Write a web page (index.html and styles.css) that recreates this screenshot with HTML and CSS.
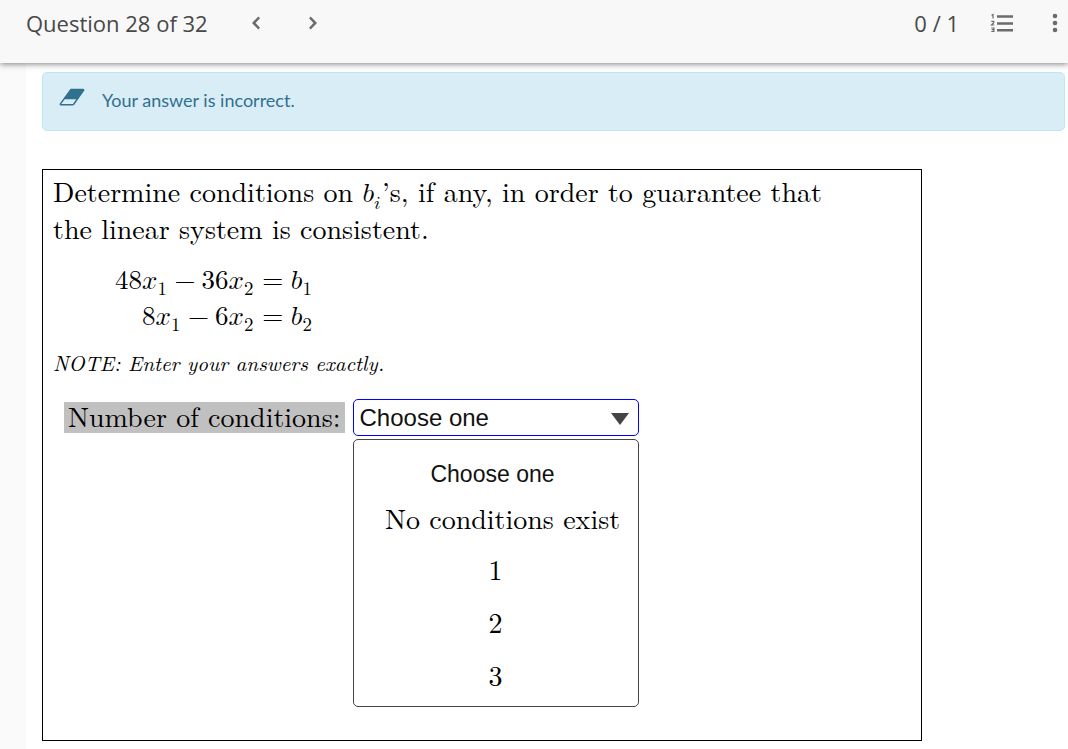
FILE: index.html
```html
<!DOCTYPE html>
<html lang="en">
<head>
  <meta charset="UTF-8">
  <meta name="viewport" content="width=device-width, initial-scale=1.0">
  <title>Question 28 of 32</title>
  <link rel="stylesheet" href="styles.css">
</head>
<body>
  <!-- Top bar -->
  <header class="top-bar">
    <h1 class="question-title">Question 28 of 32</h1>
    <nav class="pager">
      <button type="button" class="icon-button" aria-label="Previous question">
        <svg width="24" height="24" viewBox="0 0 24 24"><path d="M16 7.300 14.300 5.500 8 12l6.300 6.500 1.700-1.800-4.500-4.700z"/></svg>
      </button>
      <button type="button" class="icon-button" aria-label="Next question">
        <svg width="24" height="24" viewBox="0 0 24 24"><path d="M8 7.300 9.700 5.500 16 12l-6.300 6.500L8 16.700l4.500-4.700z"/></svg>
      </button>
    </nav>
    <div class="tools">
      <span class="score">0 / 1</span>
      <button type="button" class="icon-button" aria-label="Question list">
        <svg width="24" height="24" viewBox="0 0 24 24">
          <path d="M8 4.300h16v2.500H8zM8 11.200h16v2.500H8zM8 18h16v2.500H8z"/>
          <path class="list-digits" d="M2.500 4.200 4 3.400V7.500M2.300 10.300h2.400v1.400L2.500 14h2.800M2.300 17h2.600v3.500H2.300M2.700 18.700h2"/>
        </svg>
      </button>
      <button type="button" class="icon-button" aria-label="More options">
        <svg width="24" height="24" viewBox="0 0 24 24"><circle cx="12" cy="5" r="2.300"/><circle cx="12" cy="12" r="2.300"/><circle cx="12" cy="19" r="2.300"/></svg>
      </button>
    </div>
  </header>

  <main class="page">
    <!-- Result message -->
    <div class="alert" role="status">
      <svg class="eraser" width="26" height="20" viewBox="0 0 26 20">
        <path d="M11.500 1.500H24q1.200 0 .4 1.100L19 10.500H5z" fill="#31708f"/>
        <path d="M12 1.500H24q1.200 0 .4 1.100L15 15.800q-.6.900-1.600.9H2q-1.200 0-.4-1.100zM5.500 10.500H19" fill="none" stroke="#31708f" stroke-width="1.500"/>
      </svg>
      <span>Your answer is incorrect.</span>
    </div>

    <!-- Question -->
    <section class="question">
      <p class="prompt">Determine conditions on <math><msub><mi>b</mi><mi>i</mi></msub></math>’s, if any, in order to guarantee that<br>the linear system is consistent.</p>

      <div class="equations">
        <math class="left-side"><mn>48</mn><msub><mi>x</mi><mn>1</mn></msub><mo>−</mo><mn>36</mn><msub><mi>x</mi><mn>2</mn></msub></math>
        <math><mo>=</mo></math>
        <math><msub><mi>b</mi><mn>1</mn></msub></math>
        <math class="left-side"><mn>8</mn><msub><mi>x</mi><mn>1</mn></msub><mo>−</mo><mn>6</mn><msub><mi>x</mi><mn>2</mn></msub></math>
        <math><mo>=</mo></math>
        <math><msub><mi>b</mi><mn>2</mn></msub></math>
      </div>

      <p class="note">NOTE: Enter your answers exactly.</p>

      <div class="answer">
        <label for="conditions">Number of conditions:</label>
        <div class="dropdown">
          <select id="conditions">
            <option>Choose one</option>
            <option>No conditions exist</option>
            <option>1</option>
            <option>2</option>
            <option>3</option>
          </select>
          <svg class="arrow" width="18" height="12" viewBox="0 0 18 12"><path d="M0 0h18L9 12z"/></svg>
          <ul class="menu" role="listbox" aria-label="Number of conditions">
            <li class="placeholder" role="option" aria-selected="true">Choose one</li>
            <li class="wide" role="option">No conditions exist</li>
            <li role="option">1</li>
            <li role="option">2</li>
            <li role="option">3</li>
          </ul>
        </div>
      </div>
    </section>
  </main>
</body>
</html>
```

FILE: styles.css
```css
:root {
  --bar: #f8f8f8;
  --icon: #6b6b6b;
  --text: #484848;
  --info: #31708f;
  --math: "Latin Modern Roman", "Liberation Serif", serif;
}
* { margin: 0; padding: 0; box-sizing: border-box; }
body {
  background: #fafafa;
  color: #000;
  font-family: "Open Sans", sans-serif;
}

/* Top bar */
.top-bar {
  position: relative;
  display: flex;
  align-items: flex-start;
  height: 63px;
  padding: 7px 1px 0 26px;
  background: var(--bar);
  box-shadow: 0 1px 6px rgba(0, 0, 0, 0.5);
  color: var(--text);
}
.question-title, .score {
  font-size: 22px;
  font-weight: 400;
  line-height: 32px;
}
.pager {
  display: flex;
  gap: 33px;
  margin-left: 36px;
}
.tools {
  display: flex;
  gap: 30px;
  margin-left: auto;
}
.icon-button {
  display: flex;
  align-items: center;
  height: 32px;
  background: none;
  border: none;
  cursor: pointer;
}
.icon-button svg { fill: var(--icon); }
.icon-button .list-digits {
  fill: none;
  stroke: var(--icon);
  stroke-width: 1.2;
}

/* Content */
.page {
  min-height: calc(100vh - 63px);
  margin-left: 26px;
  padding: 9px 3px 8px 16px;
  background: #fff;
}
.alert {
  display: flex;
  align-items: center;
  gap: 17px;
  height: 59px;
  padding: 0 16px 4px;
  background: #d9edf7;
  border: 1px solid #bce8f1;
  border-radius: 5px;
  color: var(--info);
  font-family: Lato, sans-serif;
  font-size: 18px;
}
.eraser { margin-bottom: 3px; }

.question {
  max-width: 880px;
  min-height: 572px;
  margin-top: 38px;
  padding: 2px 10px;
  border: 1px solid #000;
  font-family: var(--math);
  font-size: 28px;
  line-height: 36px;
}
math {
  font-family: "Latin Modern Math", "Latin Modern Roman", "Liberation Serif", math;
  font-size: 27px;
}
.prompt math { line-height: 0; }
.equations {
  display: grid;
  grid-template-columns: max-content max-content max-content;
  grid-auto-rows: 36px;
  align-items: baseline;
  margin: 26px 0 0 62px;
}
.left-side { justify-self: end; }
.note {
  margin-top: 1px;
  font-size: 21px;
  font-style: italic;
}

/* Answer drop-down */
.answer {
  display: flex;
  align-items: center;
  gap: 8px;
  margin: 19px 0 0 11px;
}
.answer label {
  padding: 0 4px 4px;
  background: #c0c0c0;
  line-height: 27px;
}
.dropdown {
  position: relative;
  width: 286px;
}
.dropdown select {
  display: block;
  width: 100%;
  height: 37px;
  padding: 0 6px;
  appearance: none;
  background: #fff;
  border: 1px solid #00f;
  border-radius: 5px;
  color: #111;
  font-family: "Liberation Sans", Arial, sans-serif;
  font-size: 24px;
}
.arrow {
  position: absolute;
  top: 14px;
  right: 10px;
  fill: #444;
  pointer-events: none;
}
.menu {
  position: absolute;
  top: 40px;
  left: 0;
  width: 100%;
  padding: 16px 0 5px;
  background: #fff;
  border: 1px solid #444;
  border-radius: 5px;
  list-style: none;
  text-align: center;
}
.menu li { line-height: 53px; }
.menu .placeholder {
  padding-right: 6px;
  color: #111;
  font-family: "Liberation Sans", Arial, sans-serif;
  font-size: 23px;
  line-height: 36px;
}
.menu .wide { padding-left: 14px; line-height: 50px; }
```
